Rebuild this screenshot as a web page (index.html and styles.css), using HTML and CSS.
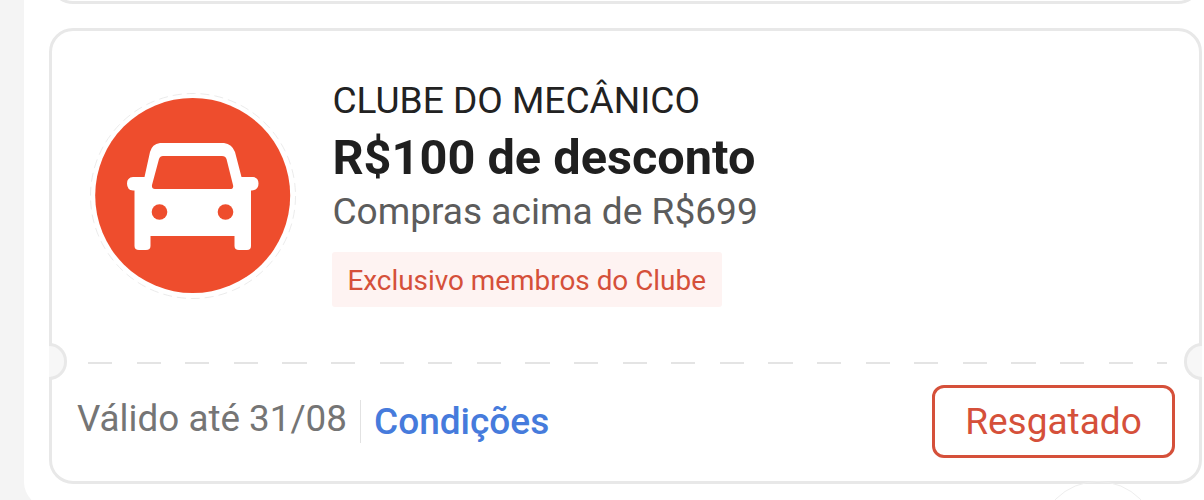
FILE: index.html
```
<!DOCTYPE html>
<html lang="pt-BR">
<head>
  <meta charset="UTF-8">
  <meta name="viewport" content="width=device-width, initial-scale=1.0">
  <title>Cupons</title>
  <link rel="stylesheet" href="styles.css">
</head>
<body>
  <div class="tela">
    <main class="painel">
      <div class="cupom cupom-anterior"></div>

      <article class="cupom">
        <div class="cupom-topo">
          <div class="logo">
            <svg viewBox="0 0 206 206" aria-hidden="true">
              <circle cx="103" cy="103" r="102.5" fill="#fff" stroke="#e2e2e2" stroke-width="0.7" stroke-dasharray="9 5"/>
              <circle cx="102.700" cy="102.500" r="97.5" fill="#ee4d2d"/>
              <path fill="#fff" fill-rule="evenodd" d="M70 50H134Q142 51 145 59L151.500 84H163Q168.500 84.500 168.500 90.500Q168.500 97 162 97.500H161V153Q161 157 157 157H149Q144.500 157 144.500 153V143H60.500V153Q60.500 157 56 157H49Q44.500 157 44.500 153V97.500H43Q37 97 37 90.500Q37 84.500 43 84H54.500L60 59Q62 51 70 50ZM73 63Q70 63 69 66L62 92Q61.500 96 65 96H140Q144 96 143 92L136.500 66Q135.500 63 132 63Z"/>
              <circle cx="69.500" cy="119" r="7.800" fill="#ee4d2d"/>
              <circle cx="135.500" cy="119" r="7.800" fill="#ee4d2d"/>
            </svg>
          </div>
          <div class="info">
            <div class="loja">CLUBE DO MECÂNICO</div>
            <h2>R$100 de desconto</h2>
            <div class="minimo">Compras acima de R$699</div>
            <span class="etiqueta">Exclusivo membros do Clube</span>
          </div>
        </div>

        <div class="picote"></div>

        <div class="cupom-rodape">
          <span class="validade">Válido até 31/08</span>
          <a class="condicoes">Condições</a>
          <button type="button">Resgatado</button>
        </div>

        <span class="furo furo-esquerdo"></span>
        <span class="furo furo-direito"></span>
      </article>
    </main>
    <div class="flutuante"></div>
  </div>
</body>
</html>
```

FILE: styles.css
```
* {
  box-sizing: border-box;
}

body {
  margin: 0;
  background: #f4f4f4;
  font-family: Roboto, "Liberation Sans", sans-serif;
}

.tela {
  position: relative;
  height: 500px;
  overflow: hidden;
}

.painel {
  width: 1202px;
  height: 507px;
  margin-left: 24px;
  padding-left: 25px;
  background: #fff;
  border-radius: 0 0 0 25px;
  overflow: hidden;
}

.cupom {
  position: relative;
  width: 1153px;
  height: 456px;
  border: 3px solid #e8e8e8;
  border-radius: 24px;
  background: #fff;
}

.cupom-anterior {
  margin-top: -452px;
  margin-bottom: 24px;
}

.cupom-topo {
  display: flex;
  height: 331px;
  padding: 48px 0 0 38px;
}

.logo {
  width: 206px;
  height: 206px;
  margin-top: 14px;
}

.logo svg {
  display: block;
}

.info {
  margin-left: 36.4px;
}

.loja {
  font-size: 37.1px;
  line-height: 44px;
  color: #222;
}

h2 {
  margin: 0;
  font-size: 48.7px;
  line-height: 69px;
  color: #1f1f1f;
}

.minimo {
  font-size: 37.1px;
  line-height: 40px;
  color: #5c5c5c;
}

.etiqueta {
  display: inline-block;
  margin-top: 20px;
  padding: 2px 16px 0 15px;
  font-size: 27.9px;
  line-height: 53px;
  color: #d5503a;
  background: #fef3f2;
  border-radius: 3px;
}

.picote {
  height: 2px;
  margin: 0 32px 0 36px;
  background: repeating-linear-gradient(90deg, #e4e4e4 0 24.3px, transparent 24.3px 48.6px);
}

.cupom-rodape {
  display: flex;
  align-items: flex-start;
  padding: 21px 24px 0 25px;
}

.validade {
  margin-top: 10px;
  font-size: 36.8px;
  line-height: 48px;
  color: #757575;
}

.condicoes {
  margin: 15px 0 0 13px;
  padding-left: 13px;
  border-left: 1px solid #e2e2e2;
  font-size: 37px;
  font-weight: 500;
  line-height: 43px;
  color: #467bdc;
}

button {
  width: 243px;
  height: 73px;
  margin-left: auto;
  padding: 0;
  background: #fff;
  border: 3px solid #d5503a;
  border-radius: 12px;
  font-family: inherit;
  font-size: 37px;
  color: #d5503a;
}

/* recortes laterais do cupom */
.furo {
  position: absolute;
  top: 312px;
  width: 18px;
  height: 37px;
  background: #f7f7f7;
  border: 3px solid #e8e8e8;
}

.furo-esquerdo {
  left: -3px;
  border-left: none;
  border-radius: 0 19px 19px 0;
}

.furo-direito {
  right: -3px;
  border-right: none;
  border-radius: 19px 0 0 19px;
}

.flutuante {
  position: absolute;
  left: 1038px;
  top: 481px;
  width: 120px;
  height: 120px;
  border: 1px solid #eee;
  border-radius: 50%;
}
```
